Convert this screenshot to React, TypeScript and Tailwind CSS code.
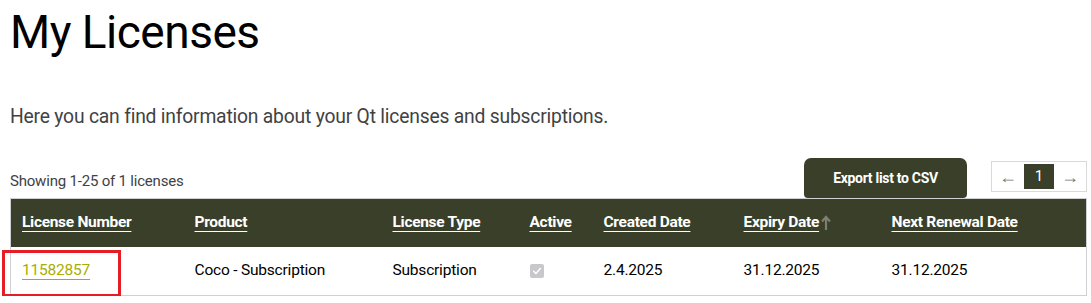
/* ------------------------------------------------------------------ */
/*  Data                                                               */
/* ------------------------------------------------------------------ */

const columns = [
  { label: 'License Number', width: 'w-[173px]' },
  { label: 'Product', width: 'w-[198px]' },
  { label: 'License Type', width: 'w-[137px]' },
  { label: 'Active', width: 'w-[74px]' },
  { label: 'Created Date', width: 'w-[140px]' },
  { label: 'Expiry Date', width: 'w-[148px]', sorted: true },
  { label: 'Next Renewal Date', width: '' },
];

/* ------------------------------------------------------------------ */
/*  Component                                                          */
/* ------------------------------------------------------------------ */

export default function App() {
  return (
    <div
      className="bg-white pl-[10px] pr-[4px] text-black"
      style={{ fontFamily: 'Roboto, "Noto Sans", sans-serif' }}
    >
      <h1 className="pt-[3px] text-[46px] leading-[58px] font-normal tracking-[-0.5px] text-black">
        My Licenses
      </h1>

      <p className="mt-[42px] text-[19.3px] leading-[28px] tracking-[-0.2px] text-[#404244]">
        Here you can find information about your Qt licenses and subscriptions.
      </p>

      {/* Toolbar */}
      <div className="mt-[27px] flex h-[40px] items-end">
        <span className="mb-[6px] flex-1 text-[15px] tracking-[-0.2px] text-[#404244]">
          Showing 1-25 of 1 licenses
        </span>
        <button className="h-[40px] w-[163px] rounded-t-[7px] rounded-b-[4px] bg-[#393f29] text-[14px] font-bold tracking-[-0.3px] text-white">
          Export list to CSV
        </button>
        <div className="mb-[6px] ml-[24px] flex h-[31px] border border-[#d9d9d9]">
          <span className="flex w-[32px] items-center justify-center text-[18px] text-[#777]">
            ←
          </span>
          <span className="my-[2px] flex w-[30px] items-center justify-center bg-[#393f29] text-[15px] text-white">
            1
          </span>
          <span className="flex w-[32px] items-center justify-center text-[18px] text-[#777]">
            →
          </span>
        </div>
      </div>

      {/* Table */}
      <div className="relative">
        <table className="w-[1077px] table-fixed border-collapse border border-[#cfd0d4] text-left">
          <thead>
            <tr className="h-[48px] bg-[#393f29]">
              {columns.map((c) => (
                <th
                  key={c.label}
                  className={`${c.width} pl-[11px] text-[15.5px] font-bold tracking-[-0.3px] text-white`}
                >
                  <span className="inline-flex items-center">
                    <span className="underline decoration-1 underline-offset-[4px]">
                      {c.label}
                    </span>
                    {c.sorted && (
                      <svg viewBox="0 0 10 16" className="ml-[2px] h-[16px] w-[10px]">
                        <path
                          d="M5 15 V2.5 M1 6.5 L5 2 L9 6.5"
                          fill="none"
                          stroke="#7d7f72"
                          strokeWidth="2.2"
                          strokeLinejoin="miter"
                        />
                      </svg>
                    )}
                  </span>
                </th>
              ))}
            </tr>
          </thead>
          <tbody>
            <tr className="h-[49px] text-[15.5px] tracking-[-0.2px]">
              <td className="pl-[11px]">
                <a className="text-[#a8ad00] underline decoration-1 underline-offset-[4px]">11582857</a>
              </td>
              <td className="pl-[11px]">Coco - Subscription</td>
              <td className="pl-[11px]">Subscription</td>
              <td className="pl-[11px]">
                <span className="flex h-[14px] w-[14px] items-center justify-center rounded-[2px] bg-[#c8c8cc]">
                  <svg viewBox="0 0 12 12" className="h-[10px] w-[10px]">
                    <path d="M2 6.2 L4.8 9 L10 3" fill="none" stroke="white" strokeWidth="1.8" strokeLinecap="round" strokeLinejoin="round" />
                  </svg>
                </span>
              </td>
              <td className="pl-[11px]">2.4.2025</td>
              <td className="pl-[11px]">31.12.2025</td>
              <td className="pl-[11px]">31.12.2025</td>
            </tr>
          </tbody>
        </table>

        {/* Highlight annotation */}
        <div className="pointer-events-none absolute top-[52px] left-[-8px] h-[47px] w-[119px] border-[3px] border-[#e41e26]" />
      </div>
    </div>
  );
}
